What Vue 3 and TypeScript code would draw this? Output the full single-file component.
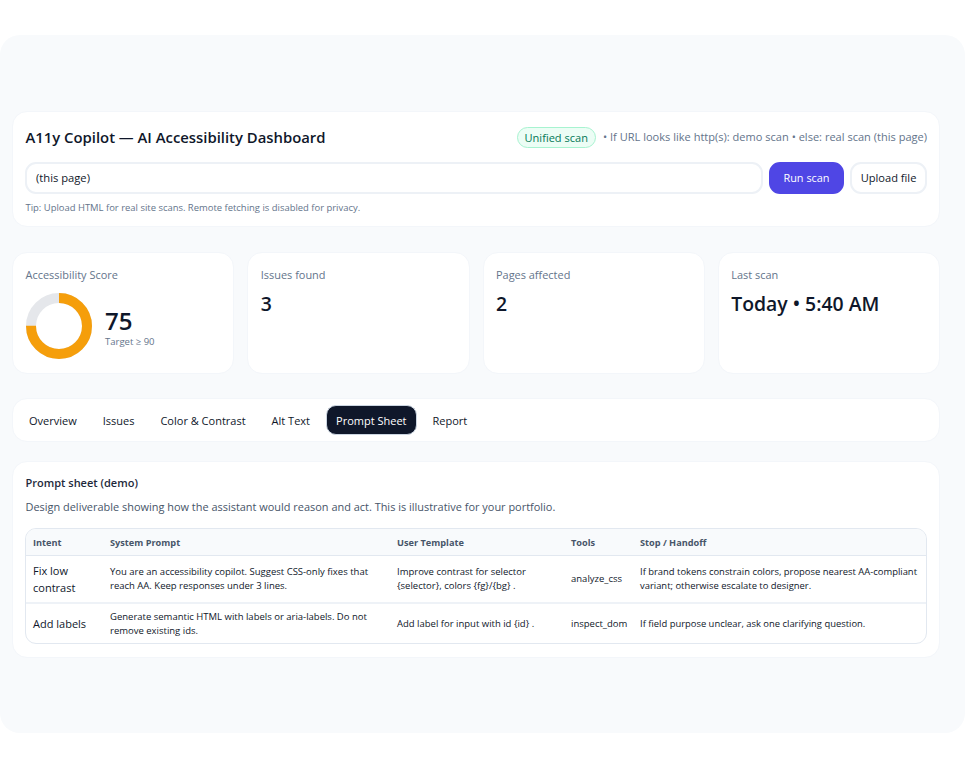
<script setup lang="ts">
interface Stat { label: string; value: string }
const stats: Stat[] = [
  { label: 'Issues found', value: '3' },
  { label: 'Pages affected', value: '2' },
  { label: 'Last scan', value: 'Today • 5:40 AM' },
]
const tabs = ['Overview', 'Issues', 'Color & Contrast', 'Alt Text', 'Prompt Sheet', 'Report']
const active = 'Prompt Sheet'
const rows = [
  {
    intent: 'Fix low contrast',
    system: 'You are an accessibility copilot. Suggest CSS-only fixes that reach AA. Keep responses under 3 lines.',
    user: 'Improve contrast for selector {selector}, colors {fg}/{bg} .',
    tools: 'analyze_css',
    stop: 'If brand tokens constrain colors, propose nearest AA-compliant variant; otherwise escalate to designer.',
  },
  {
    intent: 'Add labels',
    system: 'Generate semantic HTML with labels or aria-labels. Do not remove existing ids.',
    user: 'Add label for input with id {id} .',
    tools: 'inspect_dom',
    stop: 'If field purpose unclear, ask one clarifying question.',
  },
]
const r = 28
const c = 2 * Math.PI * r
const dash = `${c * 0.75} ${c * 0.25}`
</script>

<template>
  <div class="page">
    <main class="panel">
      <section class="card header">
        <div class="top">
          <h1>A11y Copilot — AI Accessibility Dashboard</h1>
          <div class="meta">
            <span class="pill">Unified scan</span>
            <span>• If URL looks like http(s): demo scan • else: real scan (this page)</span>
          </div>
        </div>
        <div class="controls">
          <input class="url" type="text" value="(this page)" aria-label="URL" />
          <button class="btn primary">Run scan</button>
          <button class="btn">Upload file</button>
        </div>
        <p class="tip">Tip: Upload HTML for real site scans. Remote fetching is disabled for privacy.</p>
      </section>

      <section class="stats">
        <div class="card stat">
          <div class="label">Accessibility Score</div>
          <div class="score">
            <svg class="donut" width="66" height="66" viewBox="0 0 66 66">
              <circle cx="33" cy="33" :r="r" fill="none" stroke="#e5e7eb" stroke-width="10" />
              <circle cx="33" cy="33" :r="r" fill="none" stroke="#f59e0b" stroke-width="10"
                :stroke-dasharray="dash" transform="rotate(-90 33 33)" />
            </svg>
            <div>
              <div class="num big">75</div>
              <div class="target">Target ≥ 90</div>
            </div>
          </div>
        </div>
        <div v-for="s in stats" :key="s.label" class="card stat">
          <div class="label">{{ s.label }}</div>
          <div class="num">{{ s.value }}</div>
        </div>
      </section>

      <nav class="card tabs">
        <button v-for="t in tabs" :key="t" class="tab" :class="{ on: t === active }">{{ t }}</button>
      </nav>

      <section class="card sheet">
        <h2>Prompt sheet (demo)</h2>
        <p class="desc">Design deliverable showing how the assistant would reason and act. This is illustrative for your portfolio.</p>
        <div class="table-wrap">
          <table>
            <colgroup>
              <col class="c1" />
              <col class="c2" />
              <col class="c3" />
              <col class="c4" />
              <col />
            </colgroup>
            <thead>
              <tr>
                <th>Intent</th><th>System Prompt</th><th>User Template</th><th>Tools</th><th>Stop / Handoff</th>
              </tr>
            </thead>
            <tbody>
              <tr v-for="row in rows" :key="row.intent">
                <td class="intent">{{ row.intent }}</td>
                <td>{{ row.system }}</td>
                <td>{{ row.user }}</td>
                <td>{{ row.tools }}</td>
                <td>{{ row.stop }}</td>
              </tr>
            </tbody>
          </table>
        </div>
      </section>
    </main>
  </div>
</template>

<style>
html, body { margin: 0; background: #fff; }
</style>

<style scoped>
* { box-sizing: border-box; }
.page {
  width: 972px;
  height: 768px;
  padding: 35px 7px 35px 0;
  font-family: "Open Sans", "Noto Sans", sans-serif;
  color: #0f172a;
}
.panel {
  height: 698px;
  background: #f8fafc;
  border-radius: 20px;
  padding: 76px 25px 0 12px;
}
.card {
  background: #fff;
  border: 1px solid #f3f6fa;
  border-radius: 15px;
}
.header { height: 116px; padding: 14px 12px 0; }
.top { display: flex; justify-content: space-between; align-items: center; height: 24px; }
h1 { margin: -2px 0 0 0.5px; font-size: 14.85px; font-weight: 600; color: #0f172a; }
.meta { display: flex; align-items: center; gap: 7px; font-size: 11.05px; line-height: 16px; color: #64748b; white-space: nowrap; margin-top: -2px; }
.pill {
  height: 21px;
  line-height: 19px;
  padding: 0 7px;
  border: 1px solid #a7f3d0;
  border-radius: 11px;
  background: #ecfdf5;
  color: #047857;
}
.controls { display: flex; gap: 6px; margin-top: 12px; height: 32px; }
.url {
  flex: 1;
  min-width: 0;
  border: 2px solid #edf1f6;
  border-radius: 11px;
  padding: 0 9px 2px;
  font: 11.2px "Open Sans", "Noto Sans", sans-serif;
  color: #0f172a;
  background: #fff;
}
.btn {
  border: 2px solid #edf1f6;
  border-radius: 11px;
  width: 77px;
  padding: 0 0 2px;
  background: #fff;
  color: #0f172a;
  font: 500 11.1px "Open Sans", "Noto Sans", sans-serif;
}
.btn.primary { width: 75px; background: #4f46e5; border-color: #4f46e5; color: #fff; font-size: 10.9px; }
.tip { margin: 7px 0 0 0.5px; font-size: 9.45px; color: #64748b; }
.stats {
  display: grid;
  grid-template-columns: repeat(4, 1fr);
  gap: 13px;
  margin-top: 25px;
  height: 121px;
}
.stat { padding: 14px 12px; }
.label { font-size: 10.95px; color: #64748b; line-height: 16px; margin-left: 0.5px; }
.score { display: flex; align-items: center; gap: 13.5px; margin-top: 10px; padding-left: 0.5px; }
.donut { display: block; }
.num { font-size: 19.4px; font-weight: 600; line-height: 26px; margin-top: 8px; margin-left: 0.5px; color: #0f172a; }
.num.big { font-size: 24px; margin-top: 2px; line-height: 28px; margin-left: 0; }
.target { font-size: 9.5px; color: #64748b; line-height: 13px; }
.tabs { display: flex; align-items: center; gap: 6px; height: 44px; margin-top: 25px; padding: 0 6px; }
.tab {
  border: 1px solid transparent;
  background: none;
  padding: 0 9px;
  height: 30px;
  border-radius: 10px;
  font: 11px "Open Sans", "Noto Sans", sans-serif;
  color: #0f172a;
}
.tab.on { background: #0f172a; color: #fff; border-color: #cbd5e1; }
.sheet { height: 197px; margin-top: 19px; padding: 12px 12px 0; }
h2 { margin: 0 0 0 0.5px; font-size: 11px; font-weight: 600; line-height: 17px; color: #1e293b; }
.desc { margin: 7px 0 0 0.5px; font-size: 10.95px; line-height: 17px; color: #475569; }
.table-wrap { margin-top: 13px; border: 1px solid #e2e8f0; border-radius: 11px; overflow: hidden; }
table { width: 100%; border-collapse: collapse; table-layout: fixed; }
.c1 { width: 77px; }
.c2 { width: 287px; }
.c3 { width: 174px; }
.c4 { width: 69px; }
th {
  height: 26px;
  padding: 1px 7px 0;
  text-align: left;
  font-size: 9.2px;
  font-weight: 700;
  color: #475569;
  background: #f8fafc;
  border-bottom: 1px solid #e2e8f0;
}
td {
  padding: 5px 7px;
  font-size: 9.5px;
  line-height: 13.5px;
  vertical-align: middle;
  color: #0f172a;
}
td:last-child { padding-right: 0; font-size: 9.42px; }
tbody tr:first-child td { height: 48px; border-bottom: 2px solid #eef2f7; }
tbody tr:last-child td { height: 40px; }
td.intent { font-size: 11px; line-height: 17px; }
</style>
